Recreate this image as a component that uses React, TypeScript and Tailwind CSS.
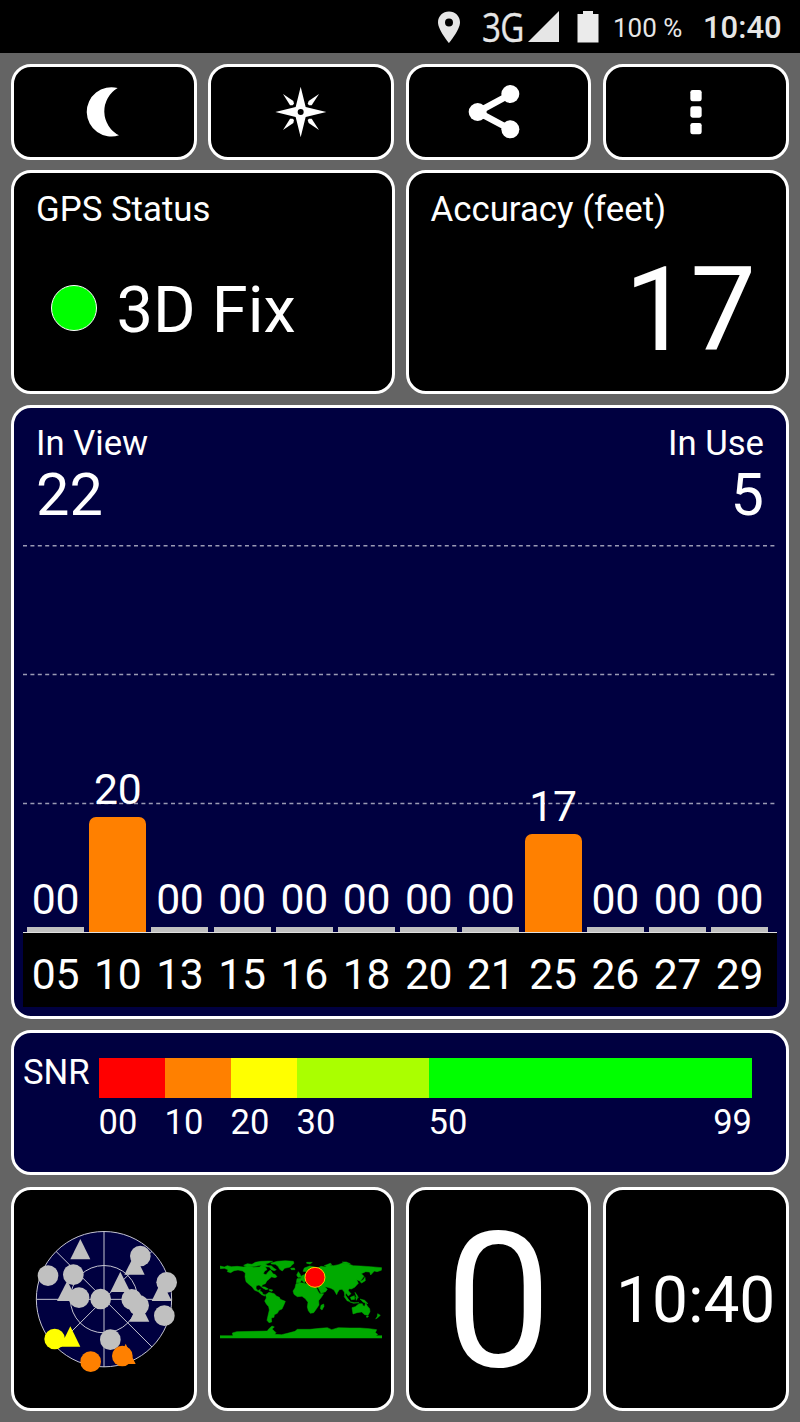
import type { ReactNode } from 'react';
import clsx from 'clsx';

type Satellite = { id: string; snr: number };

const satellites: Satellite[] = [
  { id: '05', snr: 0 },
  { id: '10', snr: 20 },
  { id: '13', snr: 0 },
  { id: '15', snr: 0 },
  { id: '16', snr: 0 },
  { id: '18', snr: 0 },
  { id: '20', snr: 0 },
  { id: '21', snr: 0 },
  { id: '25', snr: 17 },
  { id: '26', snr: 0 },
  { id: '27', snr: 0 },
  { id: '29', snr: 0 },
];

const snrScale = [
  { from: '00', width: 'w-[66px]', color: 'bg-[#ff0000]' },
  { from: '10', width: 'w-[66px]', color: 'bg-[#ff8000]' },
  { from: '20', width: 'w-[66px]', color: 'bg-[#ffff00]' },
  { from: '30', width: 'w-[132px]', color: 'bg-[#aaff00]' },
  { from: '50', width: 'flex-1', color: 'bg-[#00ff00]' },
];

function Panel({ className, children }: { className?: string; children: ReactNode }) {
  return <div className={clsx('rounded-[20px] border-3 border-white', className)}>{children}</div>;
}

function StatusBar() {
  return (
    <div className="h-[53px] bg-black flex items-center justify-end pr-[18px] text-[#e6e6e6]">
      <svg className="w-[22px] h-8 mr-[22px]" viewBox="0 0 22 32" fill="#e6e6e6">
        <path fillRule="evenodd" d="M11 0.5C4.9 0.5 0 5.2 0 11.2C0 19 11 32 11 32S22 19 22 11.2C22 5.2 17.1 0.5 11 0.5ZM11 7.5A4 4 0 1 1 11 15.5A4 4 0 1 1 11 7.5Z" />
      </svg>
      <span className="w-[46px] h-[53px] leading-[54px] text-[39.5px] font-['Open_Sans',sans-serif]">
        <span className="inline-block origin-left scale-x-[0.84] tracking-[-1px] [-webkit-text-stroke:0.3px_#e6e6e6]">3G</span>
      </span>
      <svg className="w-[31px] h-8 mr-[18px]" viewBox="0 0 31 32" fill="#e6e6e6">
        <path d="M31 0V31H0Z" />
      </svg>
      <svg className="w-[22px] h-8" viewBox="0 0 22 32" fill="#ebebeb">
        <path d="M6 0H16V3H21.5V31.5H0.5V3H6Z" />
      </svg>
      <span className="w-[70px] ml-[14px] text-[26px] leading-[53px] pt-[3px] whitespace-nowrap">100 %</span>
      <span className="w-[79px] ml-[20px] text-[31px] leading-[53px] pt-[2px] font-medium whitespace-nowrap">10:40</span>
    </div>
  );
}

function Toolbar() {
  return (
    <div className="grid grid-cols-4 gap-[11.5px] mr-[0.5px] h-24">
      <Panel className="bg-black flex items-center justify-center">
        <svg className="w-[60px] h-[60px]" viewBox="221 81 180 180" fill="white">
          <path d="M352 99A74 74 0 1 0 356 241A81 81 0 0 1 352 99Z" />
        </svg>
      </Panel>
      <Panel className="bg-black flex items-center justify-center">
        <svg className="w-[60px] h-[60px]" viewBox="813 81 180 180" fill="white">
          <path d="M902 95L917 156L979 171L917 186L902 247L887 186L826 171L887 156Z" />
          <path d="M849 117L880 138L882 146L878 151L870 151Z" />
          <path d="M957 117L926 138L923 146L927 151L935 151Z" />
          <path d="M849 225L880 204L882 195L878 191L870 191Z" />
          <path d="M957 225L926 204L923 195L927 191L935 191Z" />
          <circle cx="902" cy="171" r="9" fill="black" />
        </svg>
      </Panel>
      <Panel className="bg-black flex items-center justify-center">
        <svg className="w-[60px] h-[60px]" viewBox="206 81 180 180" fill="white">
          <path d="M333 118L235 171L333 223" fill="none" stroke="white" strokeWidth="20" />
          <circle cx="235" cy="171" r="27" />
          <circle cx="333" cy="117" r="27" />
          <circle cx="333" cy="223" r="27" />
        </svg>
      </Panel>
      <Panel className="bg-black flex items-center justify-center">
        <svg className="w-[60px] h-[60px]" viewBox="796 81 180 180" fill="white">
          <rect x="869" y="105" width="34" height="34" rx="7" />
          <rect x="869" y="154" width="34" height="34" rx="7" />
          <rect x="869" y="204" width="34" height="34" rx="7" />
        </svg>
      </Panel>
    </div>
  );
}

function SignalChart() {
  return (
    <Panel className="bg-[#000040] mt-[11px] h-[614px]">
      <div className="flex justify-between px-[22px] pt-[18px] h-[137px]">
        <div>
          <p className="text-[34.7px] leading-[34px]">In View</p>
          <p className="text-[59.5px] leading-[60px] mt-[5px]">22</p>
        </div>
        <div className="text-right">
          <p className="text-[34.7px] leading-[34px]">In Use</p>
          <p className="text-[59.5px] leading-[60px] mt-[5px]">5</p>
        </div>
      </div>

      <div className="mx-[9px] h-[387px] relative">
        <svg className="absolute left-0 top-0 w-[752px] h-[260px]" viewBox="0 0 752 260">
          <g stroke="#9a9ab4" strokeWidth="1.4" strokeDasharray="4 3.4">
            <path d="M0 0.7H752" />
            <path d="M0 129.5H752" />
            <path d="M0 258.5H752" />
          </g>
        </svg>
        <div className="relative flex items-end gap-[5.2px] h-full pl-1">
          {satellites.map((sat) => (
            <div key={sat.id} className="w-[57px] flex flex-col items-center">
              <span className="text-[42.7px] leading-[43px] mb-[6px] tracking-[-0.3px]">{String(sat.snr).padStart(2, '0')}</span>
              <div
                className={clsx('w-full', sat.snr > 0 ? 'bg-[#ff8000] rounded-t-[7px]' : 'bg-[#c0c0c0]')}
                style={{ height: Math.max(5, sat.snr * 5.75) }}
              />
            </div>
          ))}
        </div>
      </div>

      <div className="ml-[9px] w-[754px] h-[75px] bg-black border-t border-[#e0e0e0] flex gap-[5.2px] pl-1 pt-[20px]">
        {satellites.map((sat) => (
          <span key={sat.id} className="w-[57px] text-center text-[42.7px] leading-[43px] tracking-[-0.3px]">
            {sat.id}
          </span>
        ))}
      </div>
    </Panel>
  );
}

function SnrLegend() {
  return (
    <Panel className="bg-[#000040] mt-[11px] h-[145px] flex pl-[8px] pt-[25px]">
      <span className="w-[76.5px] pl-px text-[34.7px] leading-[28px]">SNR</span>
      <div className="w-[653.5px]">
        <div className="flex h-10">
          {snrScale.map((band) => (
            <div key={band.from} className={clsx(band.width, band.color)} />
          ))}
        </div>
        <div className="flex mt-[7px] text-[34.5px] leading-[35px]">
          {snrScale.map((band) => (
            <span key={band.from} className={band.width}>{band.from}</span>
          ))}
          <span>99</span>
        </div>
      </div>
    </Panel>
  );
}

function SkyView() {
  return (
    <svg className="w-[152px] h-[152px] -mt-px" viewBox="54 39 456 456">
      <g fill="none" stroke="#c4c4d0" strokeWidth="3">
        <circle cx="282" cy="267.5" r="203" fill="#000040" />
        <circle cx="282" cy="267.5" r="101" />
        <path d="M282 64V471M79 268H486M138 124L426 411M426 124L138 411" />
      </g>
      <g fill="#c0c0c0">
        <path d="M211 87L241 148H181Z" />
        <path d="M374 133L404 194H343Z" />
        <path d="M331 185L361 246H301Z" />
        <path d="M172 212L202 273H141Z" />
        <path d="M455 212L485 273H425Z" />
        <path d="M388 275L418 335H358Z" />
        <circle cx="391" cy="138" r="31" />
        <circle cx="114" cy="197" r="31" />
        <circle cx="190" cy="194" r="31" />
        <circle cx="207" cy="263" r="31" />
        <circle cx="272" cy="267" r="31" />
        <circle cx="365" cy="268" r="31" />
        <circle cx="386" cy="286" r="31" />
        <circle cx="470" cy="217" r="31" />
        <circle cx="463" cy="317" r="31" />
        <circle cx="301" cy="389" r="31" />
      </g>
      <g fill="#ffff00">
        <circle cx="134" cy="387" r="31" />
        <path d="M181 349L211 410H151Z" />
      </g>
      <g fill="#ff8000">
        <circle cx="242" cy="455" r="31" />
        <circle cx="337" cy="438" r="31" />
        <path d="M347 401L377 462H317L330 440Z" />
      </g>
    </svg>
  );
}

function WorldMap() {
  return (
    <svg className="w-[162px] h-20" viewBox="30 60 486 240">
      <g fill="#00aa00" stroke="#00aa00" strokeWidth="1.5">
        {/* Antarctica */}
        <path d="M30 297V290H69L67 282L80 278L130 277L172 276L176 270L186 261L193 264L186 270L192 275L198 281L194 286L215 287L232 283L255 277L262 271L300 271L330 268L352 266L365 272L385 266L420 267L450 267L478 269L500 272L496 281L503 286L498 290H516V297Z" />
        {/* North America */}
        <path d="M30 81L43 84L52 80L64 83L82 82L100 84L112 81L130 85L148 84L154 79L166 83L171 92L164 96L160 104L168 107L175 98L181 93L187 101L193 109L184 114L177 121L171 125L166 134L158 137L154 143L147 138L139 140L138 148L144 155L151 151L150 157L156 159L159 166L167 168L163 171L153 166L145 158L134 154L126 143L118 137L108 128L105 113L106 102L98 96L84 93L72 95L62 101L52 98L54 92L43 88L31 89Z" />
        <path d="M101 79L112 74L126 76L136 70L152 67L176 66L188 67L176 72L166 75L174 80L184 80L191 87L199 92L193 95L184 92L178 84L165 83L151 79L137 82L122 83L109 82Z" />
        <path d="M183 72L202 67L226 65L250 67L252 73L245 79L241 84L224 88L217 96L209 91L204 82L196 76L184 75Z" />
        <path d="M185 106L195 106L201 113L195 116L186 114ZM154 143L165 144L175 150L168 152L158 147ZM178 151L188 153L186 157L178 155Z" />
        {/* South America */}
        <path d="M167 167L177 160L193 164L199 171L208 175L211 181L226 187L222 197L216 210L207 214L202 223L193 227L192 235L184 237L185 249L177 251L171 244L174 230L178 213L176 203L169 195L164 186L169 177Z" />
        {/* Europe and Asia */}
        <path d="M259 131L261 119L273 118L274 111L285 106L291 98L279 97L283 87L299 81L311 83L321 88L333 82L347 84L356 78L371 80L385 77L398 72L416 75L430 80L452 81L481 83L515 86L514 94L501 98L493 96L482 108L479 99L467 98L454 104L462 112L451 127L440 122L445 133L434 145L424 150L417 149L415 155L423 164L415 171L408 162L406 168L415 181L420 187L412 183L404 171L403 159L396 151L388 152L383 160L380 167L372 153L363 148L352 145L344 143L352 151L347 158L333 163L325 147L318 139L303 135L295 129L287 123L283 132L275 123L270 131Z" />
        <path d="M265 98L270 105L274 115L264 115L260 108ZM242 88L253 87L255 92L244 92ZM290 70L307 70L300 75L290 73ZM343 80L361 73L365 76L350 83ZM397 69L409 69L421 74L405 74ZM450 128L460 122L465 115L466 125L455 132Z" />
        {/* Africa */}
        <path d="M258 134L272 131L283 133L294 136L310 138L318 143L325 158L330 164L341 164L334 175L326 185L327 198L319 210L311 221L301 223L295 215L292 204L294 190L286 179L276 172L262 173L252 166L249 156L255 147Z" />
        <path d="M333 199L341 195L342 202L336 213L331 209Z" />
        {/* Oceania */}
        <path d="M426 206L436 203L447 194L457 194L459 200L464 202L467 191L472 201L479 209L480 218L474 229L464 227L455 219L441 221L429 225Z" />
        <path d="M402 172L414 181L418 187L412 186ZM421 175L433 170L434 181L424 182ZM437 174L443 176L439 184ZM418 188L433 191L447 191L430 193ZM450 180L464 184L474 194L460 190ZM435 160L441 168L445 176L439 173ZM469 231H476L471 236ZM503 224L511 229L503 236L497 240L502 232Z" />
      </g>
      <circle cx="315" cy="115" r="30" fill="#ff0000" stroke="#ffcc00" strokeWidth="3" />
    </svg>
  );
}

export default function App() {
  return (
    <div className="w-[800px] h-[1422px] bg-[#646464] text-white font-[Roboto,sans-serif] overflow-hidden">
      <StatusBar />
      <main className="px-[11px] pt-[11px]">
        <Toolbar />

        <div className="grid grid-cols-2 gap-[11px] mt-[10px] h-56">
          <Panel className="bg-black px-[22px] pt-[19px]">
            <h2 className="text-[34.8px] leading-[34px]">GPS Status</h2>
            <div className="flex items-center mt-[51px] pl-[14.5px]">
              <div className="w-[46px] h-[46px] -mt-[4px] rounded-full bg-[#00ff00] border border-white" />
              <span className="ml-[20px] pt-px text-[65px] leading-[64px]">3D Fix</span>
            </div>
          </Panel>
          <Panel className="bg-black px-[22px] pt-[19px]">
            <h2 className="text-[34.8px] leading-[34px]">Accuracy (feet)</h2>
            <p className="mt-[25px] pr-[8px] text-right text-[117px] leading-[118px]">17</p>
          </Panel>
        </div>

        <SignalChart />
        <SnrLegend />

        <div className="grid grid-cols-4 gap-[11.5px] mr-[0.5px] mt-[12px] h-56">
          <Panel className="bg-black flex items-center justify-center">
            <SkyView />
          </Panel>
          <Panel className="bg-black flex items-center justify-center">
            <WorldMap />
          </Panel>
          <Panel className="bg-black flex items-center justify-center">
            <span className="pt-[3px] text-[190px] leading-[190px]">0</span>
          </Panel>
          <Panel className="bg-black flex items-center justify-center">
            <span className="pt-[4px] text-[64px] leading-[64px]">10:40</span>
          </Panel>
        </div>
      </main>
    </div>
  );
}
